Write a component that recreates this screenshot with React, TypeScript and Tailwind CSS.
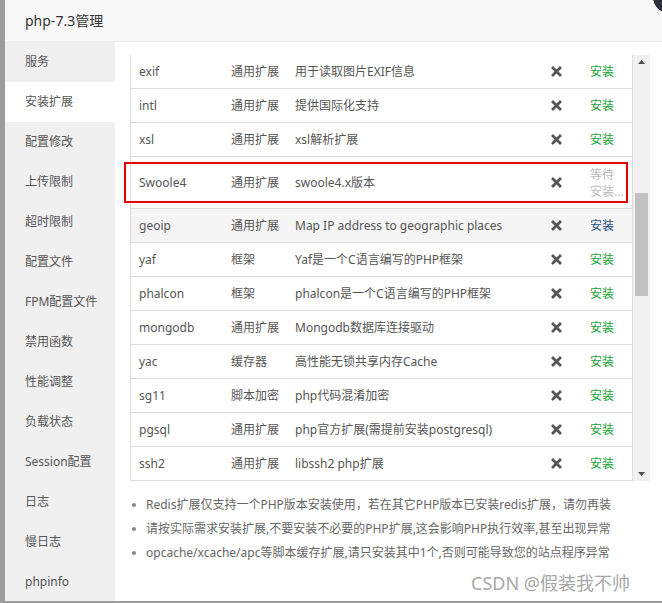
import React from "react";

const font = {
  fontFamily: '"Noto Sans", "Noto Sans CJK SC", sans-serif',
};

const sideItems = [
  "服务",
  "安装扩展",
  "配置修改",
  "上传限制",
  "超时限制",
  "配置文件",
  "FPM配置文件",
  "禁用函数",
  "性能调整",
  "负载状态",
  "Session配置",
  "日志",
  "慢日志",
  "phpinfo",
];

type Row = { name: string; type: string; desc: string; state?: "wait" | "hover" };

const rows: Row[] = [
  { name: "exif", type: "通用扩展", desc: "用于读取图片EXIF信息" },
  { name: "intl", type: "通用扩展", desc: "提供国际化支持" },
  { name: "xsl", type: "通用扩展", desc: "xsl解析扩展" },
  { name: "Swoole4", type: "通用扩展", desc: "swoole4.x版本", state: "wait" },
  { name: "geoip", type: "通用扩展", desc: "Map IP address to geographic places", state: "hover" },
  { name: "yaf", type: "框架", desc: "Yaf是一个C语言编写的PHP框架" },
  { name: "phalcon", type: "框架", desc: "phalcon是一个C语言编写的PHP框架" },
  { name: "mongodb", type: "通用扩展", desc: "Mongodb数据库连接驱动" },
  { name: "yac", type: "缓存器", desc: "高性能无锁共享内存Cache" },
  { name: "sg11", type: "脚本加密", desc: "php代码混淆加密" },
  { name: "pgsql", type: "通用扩展", desc: "php官方扩展(需提前安装postgresql)" },
  { name: "ssh2", type: "通用扩展", desc: "libssh2 php扩展" },
  { name: "xdebug", type: "调试器", desc: "不建议在生产环境使用" },
  { name: "imap", type: "通用扩展", desc: "邮件服务器必备" },
];

function XIcon() {
  return (
    <svg width="11" height="11" viewBox="0 0 11 11">
      <path d="M2 2 L9 9 M9 2 L2 9" stroke="#555" strokeWidth="2.8" strokeLinecap="square" />
    </svg>
  );
}

export default function App() {
  return (
    <div className="relative w-[662px] h-[603px] bg-[#9c9c9c] overflow-hidden" style={font}>
      <div className="relative ml-[5px] h-[601px] bg-white flex flex-col">
        <div className="h-[42px] shrink-0 bg-[#f8f8f8] border-b border-[#eeeeee] flex items-center pl-[20px] text-[14px] text-[#333]">
          php-7.3管理
        </div>
        <div className="flex flex-1 min-h-0">
          <div className="w-[110px] shrink-0 bg-[#f0f0f0] flex flex-col">
            {sideItems.map((s, i) => (
              <div
                key={s}
                className={
                  "h-[40px] shrink-0 flex items-center pl-[20px] text-[12px] text-[#555] " +
                  (i === 1 ? "bg-white" : "")
                }
              >
                {s}
              </div>
            ))}
          </div>
          <div className="flex-1 relative pl-[15px] pr-[12px] pt-[13px]">
            <div className="flex h-[426px]">
              <div className="w-[503px] h-full overflow-hidden border-l border-r border-[#dddddd]">
                {rows.map((r) => (
                  <div
                    key={r.name}
                    className={
                      "flex items-center border-b border-[#dddddd] text-[12px] text-[#555] " +
                      (r.state === "wait" ? "h-[52px] " : "h-[34px] ") +
                      (r.state === "hover" ? "bg-[#f5f5f5]" : "")
                    }
                  >
                    <div className="w-[100px] pl-[8px] shrink-0">{r.name}</div>
                    <div className="w-[64px] shrink-0">{r.type}</div>
                    <div className="flex-1 whitespace-nowrap overflow-hidden">{r.desc}</div>
                    <div className="w-[30px] shrink-0 flex justify-center">
                      <XIcon />
                    </div>
                    <div className="w-[61px] shrink-0 pl-[19px] whitespace-nowrap">
                      {r.state === "wait" ? (
                        <span className="block text-[#bbbbbb] leading-[17px]">
                          等待
                          <br />
                          安装...
                        </span>
                      ) : (
                        <span className={r.state === "hover" ? "text-[#1f4f86]" : "text-[#20a53a]"}>安装</span>
                      )}
                    </div>
                  </div>
                ))}
              </div>
              <div className="w-[17px] h-full bg-[#f1f1f1] flex flex-col items-center">
                <div className="h-[14px] flex items-center justify-center">
                  <svg width="7" height="4" viewBox="0 0 7 4">
                    <path d="M0 4 L3.5 0 L7 4 Z" fill="#505050" />
                  </svg>
                </div>
                <div className="mt-[124px] w-[13px] h-[103px] bg-[#c1c1c1]" />
                <div className="flex-1" />
                <div className="h-[14px] flex items-center justify-center">
                  <svg width="7" height="4" viewBox="0 0 7 4">
                    <path d="M0 0 L3.5 4 L7 0 Z" fill="#505050" />
                  </svg>
                </div>
              </div>
            </div>
            <ul className="pt-[12px] text-[12px] text-[#666]">
              {[
                "Redis扩展仅支持一个PHP版本安装使用，若在其它PHP版本已安装redis扩展，请勿再装",
                "请按实际需求安装扩展,不要安装不必要的PHP扩展,这会影响PHP执行效率,甚至出现异常",
                "opcache/xcache/apc等脚本缓存扩展,请只安装其中1个,否则可能导致您的站点程序异常",
              ].map((t) => (
                <li key={t} className="flex items-center h-[24px] whitespace-nowrap">
                  <span className="w-[4px] h-[4px] rounded-full bg-[#888] ml-[2px] mr-[10px] shrink-0" />
                  <span className="leading-[18px]">{t}</span>
                </li>
              ))}
            </ul>
          </div>
        </div>
        <div className="absolute left-[119px] top-[162px] w-[504px] h-[41px] border-2 border-[#e60000] pointer-events-none" />
        <div className="absolute right-[32px] top-[571px] text-[18px] leading-[24px] text-[#a8a8a8]">
          CSDN @假装我不帅
        </div>
      </div>
      <div className="absolute left-[652px] top-[-20px] w-[34px] h-[34px] rounded-full bg-[#2f2f3b] border border-white" />
    </div>
  );
}
